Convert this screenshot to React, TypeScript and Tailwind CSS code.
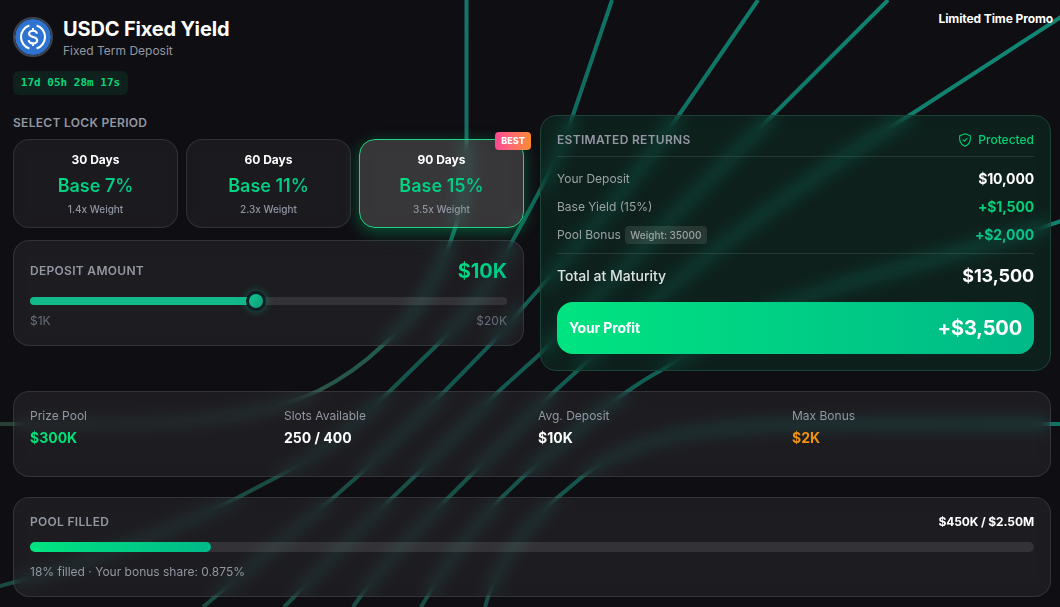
import React from 'react';

interface LockPeriod {
  days: number;
  rate: number;
  weight: string;
}

interface Stat {
  label: string;
  value: string;
  color: string;
}

const lockPeriods: LockPeriod[] = [
  { days: 30, rate: 7, weight: '1.4x' },
  { days: 60, rate: 11, weight: '2.3x' },
  { days: 90, rate: 15, weight: '3.5x' },
];

const stats: Stat[] = [
  { label: 'Prize Pool', value: '$300K', color: 'text-[#00e07a]' },
  { label: 'Slots Available', value: '250 / 400', color: 'text-white' },
  { label: 'Avg. Deposit', value: '$10K', color: 'text-white' },
  { label: 'Max Bonus', value: '$2K', color: 'text-[#f29111]' },
];

const linePaths = [
  'M612 0 L573 115 C560 154 544 184 513 240 C494 280 468 314 436 346 L390 391 C356 424 322 454 277 477 L237 498 C160 536 80 566 -4 587',
  'M758 0 L679 115 C636 178 590 232 540 288 L489 346 L445 391 L357 477 L333 498 L215 597 L203 607',
  'M888 0 L773 115 C696 192 620 272 540 354 L499 391 L414 477 L392 498 C356 533 326 563 294 597 L284 607',
  'M1064 15 L910 115 C808 178 720 244 650 304 C622 328 598 350 577 371 L555 391 L469 477 L448 498 C412 534 386 562 360 597 L353 607',
  'M1064 220 C970 254 830 280 740 323 C712 337 684 356 660 371 Q645 379 628 391 C592 417 560 443 523 477 L501 498 C468 534 446 563 427 597 L421 607',
  'M1064 424 H860 C720 424 640 430 582 477 L557 498 C522 530 500 564 488 597 L485 607',
];

const BackgroundLines = () => (
  <svg className="absolute inset-0" width="1060" height="607" viewBox="0 0 1060 607" fill="none">
    <defs>
      <linearGradient id="teal" gradientUnits="userSpaceOnUse" x1="900" y1="0" x2="400" y2="560">
        <stop offset="0" stopColor="#0f8572" />
        <stop offset="0.5" stopColor="#0f6458" />
        <stop offset="1" stopColor="#194b43" />
      </linearGradient>
      <linearGradient id="moss" gradientUnits="userSpaceOnUse" x1="466" y1="0" x2="100" y2="424">
        <stop offset="0" stopColor="#12776a" />
        <stop offset="0.4" stopColor="#136558" />
        <stop offset="0.7" stopColor="#2a5446" />
        <stop offset="1" stopColor="#283f35" />
      </linearGradient>
    </defs>
    <path
      d="M466.500 0 V160 C466.500 190 461 212 451 240 C436 282 414 318 382 346 C362 365 342 379 318 391 C256 420 180 424 90 424 H0"
      stroke="url(#moss)"
      strokeWidth="4"
    />
    {linePaths.map((d) => (
      <path key={d} d={d} stroke="url(#teal)" strokeWidth="4" />
    ))}
  </svg>
);

const UsdcIcon = () => (
  <svg className="h-full w-full" viewBox="0 0 36 36" fill="none" stroke="#fff">
    <circle cx="18" cy="18" r="18" fill="#2f73d0" stroke="none" />
    <path d="M14.4 6.4a12.2 12.2 0 0 0 0 23.2M21.6 6.4a12.2 12.2 0 0 1 0 23.2" strokeWidth="2.1" />
    <path
      d="M22 14.6c-.3-1.9-1.7-2.9-4-2.9s-3.9 1.1-3.9 3c0 4.5 8.1 2.1 8.1 6.6 0 2-1.7 3.1-4.2 3.1-2.6 0-4.1-1.1-4.3-3.2M18 9v2.7M18 24.4V27"
      strokeWidth="2.1"
    />
  </svg>
);

const ShieldIcon = () => (
  <svg width="14" height="14" viewBox="0 0 14 14" fill="none" stroke="#00d177" strokeLinecap="round" strokeLinejoin="round">
    <path d="M7 .8 12.3 2.7c.3 3.9.4 8-5.3 10.5C1.3 10.7 1.4 6.6 1.7 2.7L7 .8Z" strokeWidth="1.1" />
    <path d="m5.1 6.9 1.3 1.2 2.5-2.5" strokeWidth="1.1" />
  </svg>
);

const gradientText = 'bg-linear-to-br from-[#00e480] to-[#00b988] bg-clip-text text-transparent';

const PeriodCard: React.FC<{ period: LockPeriod; selected: boolean }> = ({ period, selected }) => (
  <button
    className={`relative flex h-[89px] flex-col items-center rounded-2xl border pt-[11px] backdrop-blur-[8px] ${
      selected
        ? 'border-[#1fd583] bg-[#fffff4]/17 shadow-[0_4px_16px_rgba(0,224,122,0.35)]'
        : 'border-white/10 bg-white/5'
    }`}
  >
    <span className="text-[12px] leading-[18px] font-bold text-white">{period.days} Days</span>
    <span className={`mt-[5px] text-[18px] leading-[24px] font-semibold ${gradientText}`}>Base {period.rate}%</span>
    <span className="mt-[4px] text-[10px] leading-[14px] font-medium text-[#9095a1]">{period.weight} Weight</span>
    {selected && (
      <span className="absolute -top-2 -right-2 flex h-[18px] w-9 items-center justify-center rounded-[4px] bg-linear-to-r from-[#ff4593] to-[#fb8a28] text-[9px] font-extrabold text-white">
        BEST
      </span>
    )}
  </button>
);

const App = () => {
  const deposit = 47.4;
  const filled = 18;

  return (
    <div className="relative h-[607px] w-[1060px] overflow-hidden bg-[#0f0e13] font-['Inter','Liberation_Sans',sans-serif]">
      <BackgroundLines />
      <div className="absolute top-[11px] right-[7px] text-[12px] leading-4 font-bold tracking-[-0.1px] text-white">
        Limited Time Promo
      </div>

      <main className="pr-[9px] pl-[13px]">
        <header className="relative flex h-[71px] w-fit items-start gap-[10px] pt-[17px]">
          <div className="h-10 w-10 overflow-hidden rounded-full border-2 border-[#3e444f]">
            <UsdcIcon />
          </div>
          <div>
            <h1 className="text-[20px] leading-[24px] font-bold tracking-[-0.16px] text-white">USDC Fixed Yield</h1>
            <p className="mt-[2px] text-[12px] leading-[16px] text-[#9397a2]">Fixed Term Deposit</p>
          </div>
        </header>

        <div className="grid grid-cols-2 gap-4">
          <section className="relative">
            <div className="flex h-6 w-[115px] items-center justify-center rounded-md bg-[#0e211c] font-['DejaVu_Sans_Mono',monospace] text-[11px] font-bold text-[#0bd27c]">
              17d 05h 28m 17s
            </div>
            <h2 className="mt-[19px] text-[12px] leading-[18px] font-semibold tracking-wide text-[#9397a2]">SELECT LOCK PERIOD</h2>
            <div className="mt-[7px] grid grid-cols-3 gap-2">
              {lockPeriods.map((period) => (
                <PeriodCard key={period.days} period={period} selected={period.days === 90} />
              ))}
            </div>

            <div className="mt-3 h-[106px] rounded-2xl border border-white/10 bg-white/6 px-4 pt-4 backdrop-blur-[8px]">
              <div className="flex h-7 items-center justify-between">
                <span className="text-[12px] font-semibold tracking-wide text-[#9397a2]">DEPOSIT AMOUNT</span>
                <span className={`text-[20px] font-bold tracking-[-0.1px] ${gradientText}`}>$10K</span>
              </div>
              <div className="relative mt-3 h-2 rounded-full bg-white/10">
                <div className="h-2 rounded-full bg-[#13b98a]" style={{ width: `${deposit}%` }} />
                <div
                  className="absolute -top-[6px] h-5 w-5 -translate-x-1/2 rounded-full border-3 border-[#0f1d27] bg-linear-to-br from-[#12c692] to-[#109a75] shadow-[0_0_8px_rgba(19,185,138,0.5)]"
                  style={{ left: `${deposit}%` }}
                />
              </div>
              <div className="mt-2 flex justify-between text-[12px] leading-4 text-[#696e7a]">
                <span>$1K</span>
                <span>$20K</span>
              </div>
            </div>
          </section>

          <section className="relative mt-11 h-[256px] rounded-2xl border border-[#1c4436] bg-[#00e17b]/9 px-4 backdrop-blur-[8px]">
            <div className="flex h-[41px] items-center justify-between border-b border-white/10 pt-[8px]">
              <h2 className="text-[12px] font-semibold tracking-wide text-[#9397a2]">ESTIMATED RETURNS</h2>
              <span className="flex items-center gap-[6px] text-[12px] font-medium text-[#00d177]">
                <ShieldIcon />
                Protected
              </span>
            </div>
            <div className="mt-2 text-[12px] text-[#9ba3a4]">
              <div className="flex h-7 items-center justify-between">
                <span>Your Deposit</span>
                <span className="pb-[2px] text-[14px] font-bold tracking-[-0.15px] text-white">$10,000</span>
              </div>
              <div className="flex h-7 items-center justify-between">
                <span>Base Yield (15%)</span>
                <span className="pb-[2px] text-[14px] font-bold tracking-[-0.15px] text-[#04cf77]">+$1,500</span>
              </div>
              <div className="flex h-7 items-center justify-between">
                <span className="flex items-center gap-1">
                  Pool Bonus
                  <span className="flex h-[18px] items-center rounded-[4px] bg-white/10 px-[5.500px] text-[10px] font-medium">
                    Weight: 35000
                  </span>
                </span>
                <span className="pb-[2px] text-[14px] font-bold tracking-[-0.15px] text-[#08c58b]">+$2,000</span>
              </div>
            </div>
            <div className="mt-1 flex h-[49px] items-center justify-between border-t border-white/10 pb-[5px]">
              <span className="text-[14px] font-medium text-[#dce2e1]">Total at Maturity</span>
              <span className="text-[18px] font-bold tracking-[-0.1px] text-white">$13,500</span>
            </div>
            <div className="flex h-[52px] items-center justify-between rounded-2xl bg-linear-to-r from-[#00e480] to-[#00b988] px-3 text-white">
              <span className="pb-[2px] text-[14px] font-bold tracking-[-0.15px]">Your Profit</span>
              <span className="text-[20px] font-bold tracking-[-0.15px]">+$3,500</span>
            </div>
          </section>
        </div>

        <section className="relative mt-5 grid h-[86px] grid-cols-4 gap-3 rounded-2xl border border-white/10 bg-white/6 px-4 pt-[15px] backdrop-blur-[8px]">
          {stats.map((stat) => (
            <div key={stat.label}>
              <div className="text-[12px] leading-[18px] text-[#9397a2]">{stat.label}</div>
              <div className={`mt-[3px] text-[14px] leading-[20px] font-bold ${stat.color}`}>{stat.value}</div>
            </div>
          ))}
        </section>

        <section className="relative mt-5 h-[100px] rounded-2xl border border-white/10 bg-white/6 px-4 pt-[15px] backdrop-blur-[8px]">
          <div className="flex h-[18px] items-center justify-between text-[12px]">
            <span className="font-semibold tracking-wide text-[#9397a2]">POOL FILLED</span>
            <span className="font-bold tracking-[-0.1px] text-white">$450K / $2.50M</span>
          </div>
          <div className="mt-[11px] h-[10px] rounded-full bg-white/10">
            <div className="h-full rounded-full bg-linear-to-r from-[#00e480] to-[#00b988]" style={{ width: `${filled}%` }} />
          </div>
          <p className="mt-3 text-[12px] leading-4 text-[#9397a2]">18% filled · Your bonus share: 0.875%</p>
        </section>
      </main>
    </div>
  );
};

export default App;
